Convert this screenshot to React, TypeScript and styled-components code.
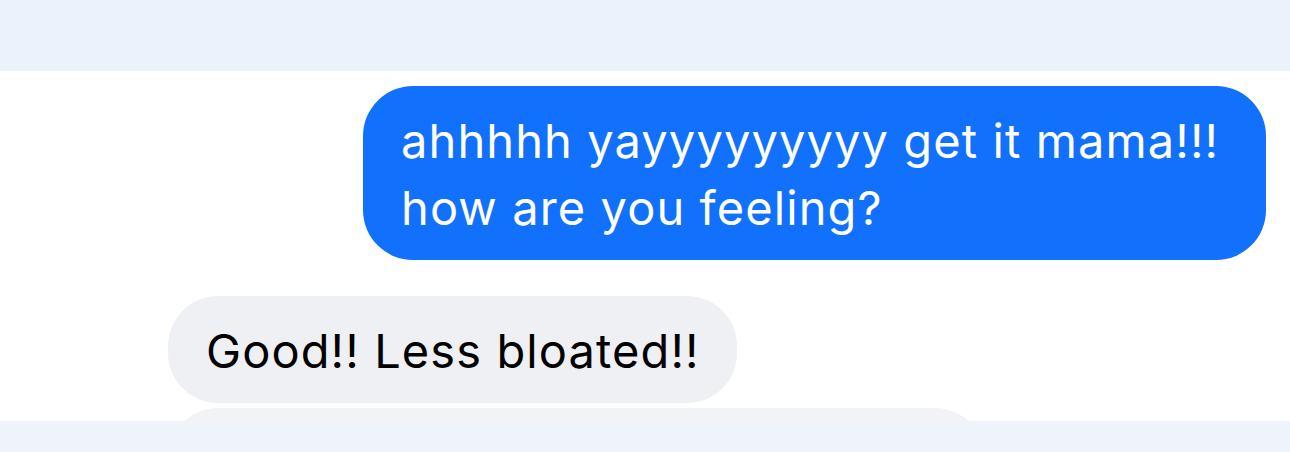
import styled, { createGlobalStyle } from "styled-components";

const GlobalStyle = createGlobalStyle`
  html, body {
    margin: 0;
    padding: 0;
    background: #ffffff;
  }
  body {
    font-family: Inter, "Noto Sans", "Liberation Sans", sans-serif;
  }
`;

type Message = {
  id: number;
  mine: boolean;
  grouped: boolean;
  text: string;
};

const messages: Message[] = [
  { id: 1, mine: true, grouped: false, text: "ahhhhh yayyyyyyyyy get it mama!!! how are you feeling?" },
  { id: 2, mine: false, grouped: false, text: "Good!! Less bloated!!" },
];

function App() {
  return (
    <>
      <GlobalStyle />
      <Page>
        <TopBar />
        <Thread>
          {messages.map((m) => (
            <Bubble key={m.id} mine={m.mine} grouped={m.grouped}>
              {m.text}
            </Bubble>
          ))}
          {/* next incoming bubble, only its top edge shows above the bar */}
          <PeekBubble />
        </Thread>
        <BottomBar />
      </Page>
    </>
  );
}

export default App;

const Page = styled.div`
  display: flex;
  flex-direction: column;
  width: 1290px;
  height: 452px;
  overflow: hidden;
`;

const TopBar = styled.div`
  height: 71px;
  flex-shrink: 0;
  background-color: #ebf2fc;
`;

const Thread = styled.div`
  display: flex;
  flex-direction: column;
  height: 350px;
  flex-shrink: 0;
  overflow: hidden;
  padding: 15px 24px 0 168px;
  box-sizing: border-box;
  background-color: #ffffff;
`;

const Bubble = styled.div<{ mine: boolean; grouped: boolean }>`
  box-sizing: border-box;
  flex-shrink: 0;
  align-self: ${({ mine }) => (mine ? "flex-end" : "flex-start")};
  max-width: 903px;
  margin-top: ${({ grouped }) => (grouped ? "5px" : "0")};
  margin-bottom: 36px;
  padding: 21px 37px 19px 38px;
  border-radius: 50px;
  font-size: 47px;
  line-height: 67px;
  letter-spacing: 1.1px;
  color: ${({ mine }) => (mine ? "#ffffff" : "#000000")};
  background-color: ${({ mine }) => (mine ? "#1170fc" : "#eff0f4")};
`;

const PeekBubble = styled.div`
  flex-shrink: 0;
  align-self: flex-start;
  width: 817px;
  height: 108px;
  margin-top: -31px;
  border-radius: 50px;
  background-color: #f2f3f6;
`;

const BottomBar = styled.div`
  height: 31px;
  flex-shrink: 0;
  background-color: #eff3fa;
`;
